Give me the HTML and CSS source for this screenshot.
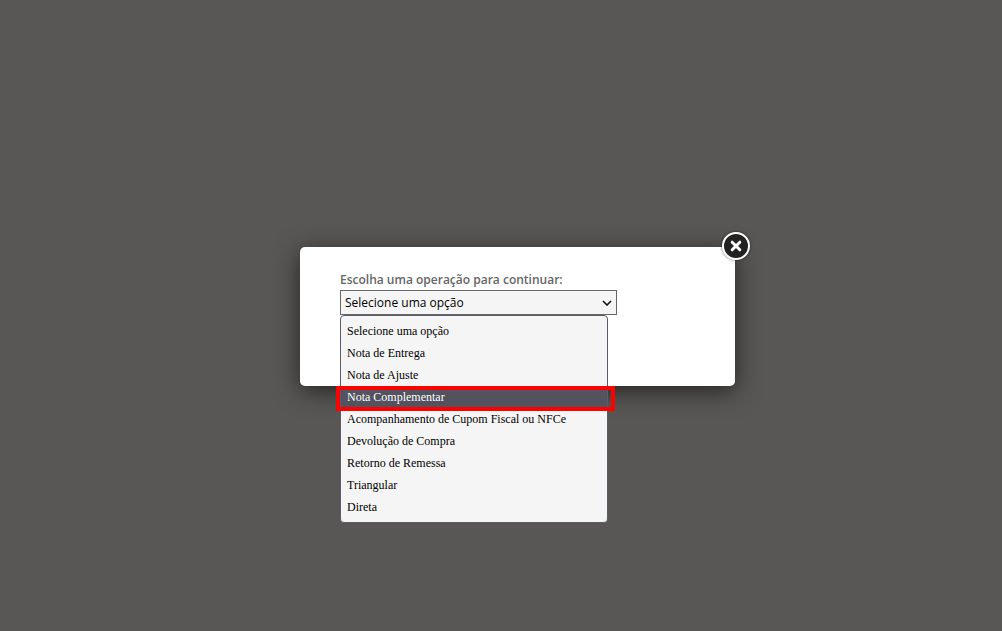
FILE: index.html
```html
<!DOCTYPE html>
<html lang="pt-BR">
<head>
<meta charset="utf-8">
<title>Escolha uma operação</title>
<link rel="stylesheet" href="styles.css">
</head>
<body>
<div class="modal">
  <button class="close" type="button" aria-label="Fechar">
    <svg class="close-icon" viewBox="0 0 12 12" width="12" height="12"><path d="M2.2 2.2 9.8 9.8M9.8 2.2 2.2 9.8" fill="none" stroke="#fff" stroke-width="3" stroke-linecap="round"/></svg>
  </button>
  <label class="label">Escolha uma operação para continuar:</label>
  <div class="select">
    <span>Selecione uma opção</span>
    <svg class="chevron" viewBox="0 0 10 6" width="10" height="6"><path d="M1 1 5 5 9 1" fill="none" stroke="#111" stroke-width="1.6"/></svg>
  </div>
  <ul class="menu">
    <li class="item">Selecione uma opção</li>
    <li class="item">Nota de Entrega</li>
    <li class="item">Nota de Ajuste</li>
    <li class="item active">Nota Complementar<span class="marker"></span></li>
    <li class="item">Acompanhamento de Cupom Fiscal ou NFCe</li>
    <li class="item">Devolução de Compra</li>
    <li class="item">Retorno de Remessa</li>
    <li class="item">Triangular</li>
    <li class="item">Direta</li>
  </ul>
</div>
</body>
</html>
```
FILE: styles.css
```css
html, body {
  margin: 0;
  height: 100%;
}
body {
  background: #585755;
  padding: 247px 0 0 300px;
  box-sizing: border-box;
  overflow: hidden;
  font-family: "Open Sans", sans-serif;
}
.modal {
  position: relative;
  box-sizing: border-box;
  width: 435px;
  height: 139px;
  padding: 24px 40px 0;
  background: #fff;
  border-radius: 5px;
  box-shadow: 0 5px 25px rgba(0, 0, 0, 0.6);
}
.close {
  position: absolute;
  top: -15px;
  right: -15px;
  box-sizing: border-box;
  width: 28px;
  height: 28px;
  padding: 0;
  display: flex;
  align-items: center;
  justify-content: center;
  background: #222;
  border: 2px solid #fff;
  border-radius: 50%;
  box-shadow: 0 0 3px rgba(0, 0, 0, 0.6);
}
.close-icon {
  display: block;
}
.label {
  display: block;
  margin-bottom: 1px;
  font-size: 12px;
  line-height: 18px;
  font-weight: 600;
  color: #666;
}
.select {
  box-sizing: border-box;
  width: 277px;
  height: 25px;
  display: flex;
  align-items: center;
  justify-content: space-between;
  padding: 0 4px;
  background: #f5f5f5;
  border: 1px solid #666;
  font-size: 12px;
  color: #000;
}
.chevron {
  display: block;
}
.menu {
  position: absolute;
  top: 68px;
  left: 40px;
  box-sizing: border-box;
  width: 268px;
  height: 208px;
  margin: 0;
  padding: 4px 0 0;
  list-style: none;
  background: #f5f5f5;
  border: 1px solid #5d5c66;
  border-radius: 4px;
  font-family: "Liberation Serif", serif;
  font-size: 12px;
  color: #000;
}
.item {
  position: relative;
  height: 22px;
  line-height: 22px;
  padding-left: 6px;
}
.active {
  background: #53525f;
  color: #fff;
}
.marker {
  position: absolute;
  top: 0;
  left: -5px;
  right: -8px;
  height: 25px;
  box-sizing: border-box;
  border: 4px solid #f00;
}
```
